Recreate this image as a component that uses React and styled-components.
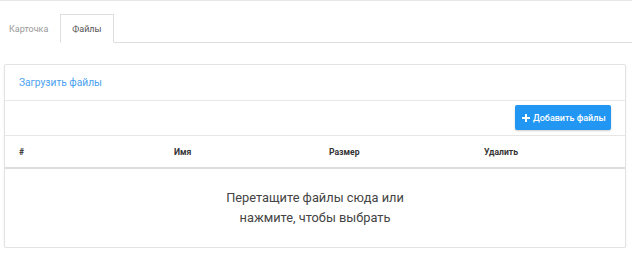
import React, { useState } from 'react'
import styled, { createGlobalStyle } from 'styled-components'

const GlobalStyle = createGlobalStyle`
  html, body {
    margin: 0;
    padding: 0;
    background: #fff;
    font-family: Roboto, "Liberation Sans", Arial, sans-serif;
    color: #333;
  }
  * { box-sizing: border-box; }
`

const Page = styled.div`
  border-top: 1px solid #e6e6e6;
  padding-top: 13px;
`

const TabList = styled.ul`
  display: flex;
  list-style: none;
  margin: 0;
  padding: 0;
  height: 29px;
  border-bottom: 1px solid #dedede;
`

const Tab = styled.li`
  display: flex;
  align-items: center;
  padding: 0 11px;
  font-size: 9px;
  cursor: pointer;
  color: ${p => (p.$active ? '#555' : '#999')};
  background: #fff;
  border: 1px solid ${p => (p.$active ? '#dedede' : 'transparent')};
  border-bottom-color: ${p => (p.$active ? '#fff' : 'transparent')};
  margin-bottom: -1px;
  &:first-child {
    padding-left: 8px;
  }
`

const Card = styled.div`
  margin: 21px 6px 0 4px;
  border: 1px solid #e3e3e3;
  border-radius: 2px;
  box-shadow: 0 1px 2px rgba(0, 0, 0, 0.08);
  background: #fff;
`

const CardHeader = styled.div`
  height: 36px;
  display: flex;
  align-items: center;
  padding: 0 14px;
  font-size: 10.2px;
  color: #4a9ff0;
  border-bottom: 1px solid #e8e8e8;
`

const Toolbar = styled.div`
  display: flex;
  justify-content: flex-end;
  padding: 4px 14px 0;
  height: 35px;
  border-bottom: 1px solid #e6e6e6;
`

const AddButton = styled.button`
  display: flex;
  align-items: center;
  gap: 3px;
  height: 25px;
  width: 96px;
  padding: 0 0 0 7px;
  border: none;
  border-radius: 2px;
  background: #2196f3;
  color: #fff;
  font-family: inherit;
  font-size: 9px;
  font-weight: 500;
  white-space: nowrap;
  box-shadow: 0 1px 2px rgba(0, 0, 0, 0.2);
  cursor: pointer;
  svg {
    flex-shrink: 0;
  }
`

const HeadRow = styled.div`
  display: grid;
  grid-template-columns: repeat(4, 1fr);
  height: 33px;
  border-bottom: 2px solid #dcdcdc;
`

const HeadCell = styled.div`
  display: flex;
  align-items: center;
  padding-left: 14px;
  font-size: 8.6px;
  font-weight: 700;
  color: #333;
`

const DropZone = styled.div`
  height: 78px;
  display: flex;
  align-items: center;
  justify-content: center;
  text-align: center;
  font-size: 12.8px;
  line-height: 20px;
  color: #444;
  cursor: pointer;
`

const PlusIcon = () => (
  <svg width="8" height="8" viewBox="0 0 8 8">
    <path d="M3 0h2v3h3v2H5v3H3V5H0V3h3z" fill="#fff" />
  </svg>
)

const columns = ['#', 'Имя', 'Размер', 'Удалить']

export default function App() {
  const [tab, setTab] = useState(1)
  return (
    <>
      <GlobalStyle />
      <Page>
        <TabList>
          <Tab $active={tab === 0} onClick={() => setTab(0)}>Карточка</Tab>
          <Tab $active={tab === 1} onClick={() => setTab(1)}>Файлы</Tab>
        </TabList>
        <Card>
          <CardHeader>Загрузить файлы</CardHeader>
          <Toolbar>
            <AddButton>
              <PlusIcon />
              Добавить файлы
            </AddButton>
          </Toolbar>
          <HeadRow>
            {columns.map(c => (
              <HeadCell key={c}>{c}</HeadCell>
            ))}
          </HeadRow>
          <DropZone>
            Перетащите файлы сюда или
            <br />
            нажмите, чтобы выбрать
          </DropZone>
        </Card>
      </Page>
    </>
  )
}
